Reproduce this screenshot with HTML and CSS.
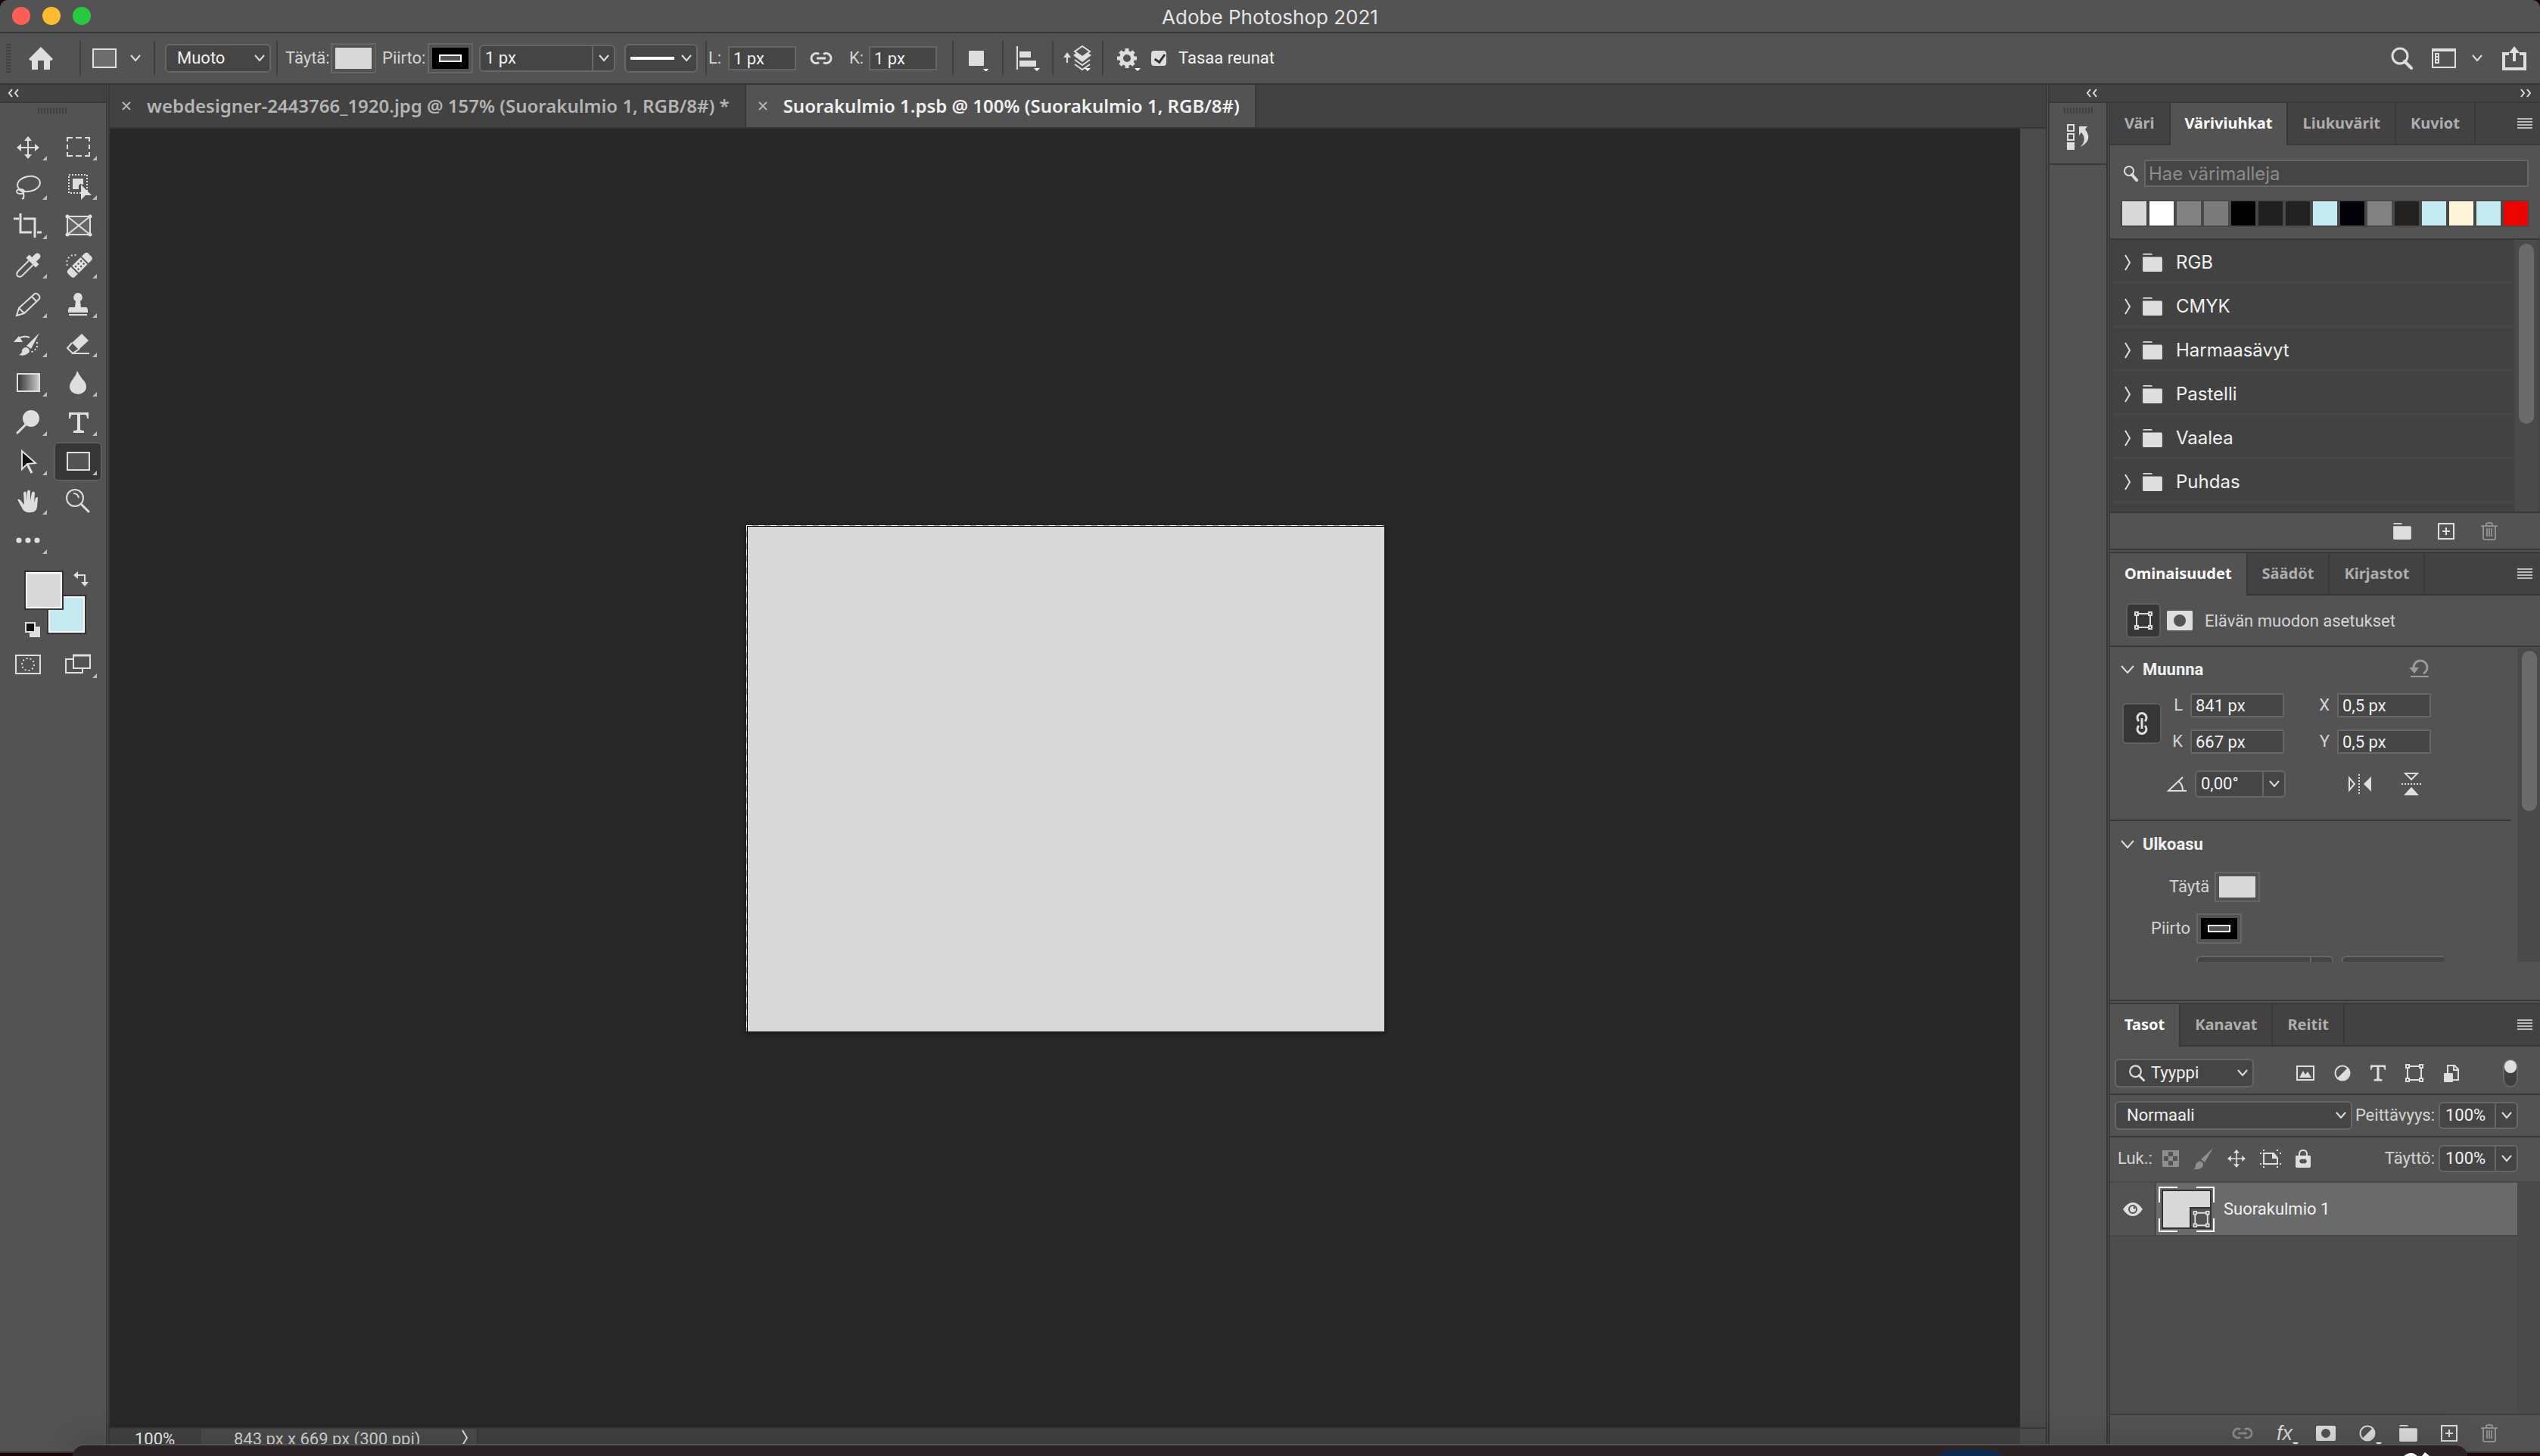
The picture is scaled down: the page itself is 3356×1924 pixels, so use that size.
FILE: index.html
```html
<!DOCTYPE html>
<html lang="fi">
<head>
<meta charset="utf-8">
<title>Adobe Photoshop 2021</title>
<link rel="stylesheet" href="styles.css">
</head>
<body>
<svg class="sprite" aria-hidden="true">
  <defs>
    <linearGradient id="grad"><stop offset="0" stop-color="#333"/><stop offset="1" stop-color="#ccc"/></linearGradient>
    <symbol id="chev" viewBox="0 0 16 12"><path d="M2 2l6 7 6-7" fill="none" stroke="currentColor" stroke-width="2"/></symbol>
    <symbol id="chev-r" viewBox="0 0 12 24"><path d="M2 2l6 10-6 10" fill="none" stroke="currentColor" stroke-width="2"/></symbol>
    <symbol id="dbl-l" viewBox="0 0 18 12"><path d="M7 1L3 6l4 5M15 1l-4 5 4 5" fill="none" stroke="currentColor" stroke-width="2"/></symbol>
    <symbol id="dbl-r" viewBox="0 0 18 12"><path d="M3 1l4 5-4 5M11 1l4 5-4 5" fill="none" stroke="currentColor" stroke-width="2"/></symbol>
    <symbol id="close" viewBox="0 0 12 12"><path d="M1 1l10 10M11 1L1 11" fill="none" stroke="currentColor" stroke-width="2"/></symbol>
    <symbol id="menu" viewBox="0 0 20 14"><path d="M0 1h20M0 5h20M0 9h20M0 13h20" stroke="currentColor" stroke-width="2"/></symbol>
    <symbol id="search" viewBox="0 0 30 30"><circle cx="13" cy="12" r="10" fill="none" stroke="currentColor" stroke-width="3"/><path d="M19 19l9 9" stroke="currentColor" stroke-width="4" stroke-linecap="round"/></symbol>
    <symbol id="link" viewBox="0 0 30 18"><path d="M12 3.500A6.500 6.500 0 1 0 12 14.500M18 3.500A6.500 6.500 0 1 1 18 14.500" fill="none" stroke="currentColor" stroke-width="3"/><path d="M9 9h12" stroke="currentColor" stroke-width="3"/></symbol>
    <symbol id="folder" viewBox="0 0 28 26"><path d="M0 2q0-2 2-2h10q2 0 2 2zM0 5h26q2 0 2 2v17q0 2-2 2H2q-2 0-2-2z" fill="currentColor"/></symbol>
    <symbol id="plus" viewBox="0 0 22 22"><rect x="1" y="1" width="20" height="20" fill="none" stroke="currentColor" stroke-width="2"/><path d="M6 11h10M11 6v10" stroke="currentColor" stroke-width="2"/></symbol>
    <symbol id="trash" viewBox="0 0 22 24"><path d="M0 5h22M7 5V3q0-2 2-2h4q2 0 2 2v2M3 6v15q0 2 2 2h12q2 0 2-2V6M8 8v11M11 8v11M14 8v11" fill="none" stroke="currentColor" stroke-width="2"/></symbol>
    <symbol id="mask" viewBox="0 0 34 26"><path fill-rule="evenodd" d="M2 0h30q2 0 2 2v22q0 2-2 2H2q-2 0-2-2V2q0-2 2-2zM17 5a8 8 0 1 0 0 16a8 8 0 1 0 0-16z" fill="currentColor"/></symbol>
    <symbol id="mask-s" viewBox="0 0 26 20"><path fill-rule="evenodd" d="M2 0h22q2 0 2 2v16q0 2-2 2H2q-2 0-2-2V2q0-2 2-2zM13 4a6 6 0 1 0 0 12a6 6 0 1 0 0-12z" fill="currentColor"/></symbol>
    <symbol id="adjust" viewBox="0 0 22 22"><circle cx="11" cy="11" r="9.500" fill="none" stroke="currentColor" stroke-width="2"/><path d="M18 4A10 10 0 0 1 4 18z" fill="currentColor"/></symbol>
    <symbol id="shape" viewBox="0 0 24 24"><path d="M3 3h18v18H3z" fill="none" stroke="currentColor" stroke-width="2"/><g fill="#484848" stroke="currentColor" stroke-width="2"><rect x="1" y="1" width="4" height="4"/><rect x="19" y="1" width="4" height="4"/><rect x="1" y="19" width="4" height="4"/><rect x="19" y="19" width="4" height="4"/></g></symbol>
    <symbol id="type" viewBox="0 0 26 27"><path d="M0 0h26v8h-2q0-5-3-5h-6v19q0 2 5 2v3H6v-3q5 0 5-2V3H5Q2 3 2 8H0z" fill="currentColor"/></symbol>
    <symbol id="move" viewBox="0 0 30 30"><path d="M15 4v22M4 15h22" stroke="currentColor" stroke-width="2"/><path d="M15 0l5 6H10zM15 30l5-6H10zM0 15l6-5v10zM30 15l-6-5v10z" fill="currentColor"/></symbol>
    <symbol id="arrow-s" viewBox="0 0 8 5"><path d="M0 0h8L4 5z" fill="currentColor"/></symbol>
  </defs>
</svg>

<div class="window">
  <header class="titlebar">
    <div class="lights"><span class="light red"></span><span class="light amber"></span><span class="light green"></span></div>
    <h1>Adobe Photoshop 2021</h1>
  </header>

  <div class="options">
    <div class="group home">
      <span class="grip-v"></span>
      <button class="icon-btn" aria-label="Koti"><svg width="32" height="30" viewBox="0 0 32 30"><path d="M16 0l16 16-2 2h-2v11q0 1-1 1h-7V18h-8v12H5q-1 0-1-1V18H2l-2-2z" fill="currentColor"/></svg></button>
    </div>
    <div class="group shape-tool">
      <svg width="32" height="26" viewBox="0 0 32 26"><rect x="1" y="1" width="30" height="24" fill="#6e6e6e" stroke="currentColor" stroke-width="2"/></svg>
      <svg width="16" height="12"><use href="#chev"/></svg>
    </div>
    <div class="group mode">
      <div class="select"><select aria-label="Tila"><option>Muoto</option></select><svg width="16" height="12"><use href="#chev"/></svg></div>
    </div>
    <div class="group paint">
      <label class="lab" for="fill">Täytä:</label>
      <button id="fill" class="swatch-btn"><span class="fill"></span></button>
      <label class="lab second" for="stroke">Piirto:</label>
      <button id="stroke" class="swatch-btn"><span class="stroke"><i></i></span></button>
      <div class="combo wide"><input value="1 px" aria-label="Piirron leveys"><button aria-label="Avaa"><svg width="16" height="12"><use href="#chev"/></svg></button></div>
      <button class="line-select" aria-label="Piirron tyyppi"><span></span><svg width="16" height="12"><use href="#chev"/></svg></button>
    </div>
    <div class="group size">
      <label for="optw">L:</label><input id="optw" class="field" value="1 px">
      <svg class="chain" width="30" height="18"><use href="#link"/></svg>
      <label for="opth">K:</label><input id="opth" class="field" value="1 px">
    </div>
    <div class="group op"><svg width="28" height="34" viewBox="0 0 28 34"><rect x="2" y="7" width="20" height="20" rx="1" fill="currentColor"/><path d="M21 31h7l-3 4z" fill="#fff"/></svg></div>
    <div class="group op"><svg width="32" height="34" viewBox="0 0 32 34"><path d="M1 1h2v31H1zM5 8h15v8H5zM5 20h22v8H5z" fill="currentColor"/><path d="M24 30h8l-4 4z" fill="#fff"/></svg></div>
    <div class="group op"><svg width="38" height="36" viewBox="0 0 38 36"><path d="M5 12v12" stroke="currentColor" stroke-width="2"/><path d="M5 10l5 7H0z" fill="currentColor"/><g fill="none" stroke="currentColor" stroke-width="2"><path d="M25 2l10 7-10 7-10-7z"/><path d="M15 20l10 7 10-7M15 26l10 7 10-7"/></g><path d="M13 14l4-3 8 5 8-5 4 3-12 9z" fill="currentColor"/><path d="M28 31h8l-4 4z" fill="#fff"/></svg></div>
    <div class="group extra">
      <svg width="34" height="34" viewBox="0 0 34 34"><circle cx="14" cy="17" r="7.500" fill="none" stroke="currentColor" stroke-width="5"/><path d="M14 4v5M14 25v5M1 17h5M22 17h5M5 8l3 3M20 23l3 3M23 8l-3 3M8 23l-3 3" stroke="currentColor" stroke-width="5"/><path d="M24 30h8l-4 4z" fill="#fff"/></svg>
      <label class="check"><input type="checkbox" checked>Tasaa reunat</label>
    </div>
    <div class="app-actions">
      <button class="icon-btn" aria-label="Etsi"><svg width="30" height="30"><use href="#search"/></svg></button>
      <button class="icon-btn" aria-label="Työtila"><svg width="32" height="28" viewBox="0 0 32 28"><path d="M1 2h30v24H1z" fill="none" stroke="currentColor" stroke-width="2"/><path d="M0 1h32v4H0z" fill="currentColor"/><path d="M5 8h4v12H5zM5 12h4M5 16h4" fill="none" stroke="currentColor" stroke-width="2"/></svg><svg width="16" height="12"><use href="#chev"/></svg></button>
      <button class="icon-btn" aria-label="Jaa"><svg width="32" height="32" viewBox="0 0 32 32"><path d="M9 10H2v20h28V10h-7" fill="none" stroke="currentColor" stroke-width="4"/><path d="M16 6v14" stroke="currentColor" stroke-width="4"/><path d="M16 0l7 9H9z" fill="currentColor"/></svg></button>
    </div>
  </div>

  <main class="work">
    <aside class="tools">
      <div class="tools-head"><svg width="18" height="12"><use href="#dbl-l"/></svg></div>
      <span class="grip"></span>
      <div class="tool-grid">
        <button aria-label="Siirto"><svg viewBox="0 0 64 52"><use href="#move" x="17" y="12" width="30" height="30"/><path class="tri" d="M57 38v6h-6z"/></svg></button>
        <button aria-label="Valintakehys"><svg viewBox="0 0 64 52"><path class="ln" d="M18 19v-5h7M29 14h8M41 14h6v5M47 23v6M47 33v5h-6M37 38h-8M25 38h-7v-5M18 29v-6"/><path class="tri" d="M57 38v6h-6z"/></svg></button>
        <button aria-label="Lasso"><svg viewBox="0 0 64 52"><ellipse class="ln" cx="33" cy="23" rx="15" ry="10" transform="rotate(-10 33 23)"/><ellipse class="ln" cx="22" cy="33" rx="5" ry="3"/><path class="ln" d="M20 31q8 2 6 11-1 0-2 1"/><path class="tri" d="M57 38v6h-6z"/></svg></button>
        <button aria-label="Kohteen valinta"><svg viewBox="0 0 64 52"><rect class="ln" x="20" y="11" width="24" height="24" stroke-dasharray="2 2"/><path class="fl" d="M25 16h14v8l-4-1-2 2v5h-8z"/><path class="fl" d="M36 24v20l6-6h8z"/><path class="tri" d="M57 38v6h-6z"/></svg></button>
        <button aria-label="Rajaus"><svg viewBox="0 0 64 52"><path class="ln3" d="M22 10v25h15M44 35h6M13 17h7M26 17h15v25"/><path class="tri" d="M57 38v6h-6z"/></svg></button>
        <button aria-label="Kehys"><svg viewBox="0 0 64 52"><rect x="18" y="14" width="30" height="24" fill="#666" stroke="currentColor" stroke-width="2"/><path class="ln" d="M18 14l30 24M48 14L18 38"/><g class="fl"><circle cx="18" cy="14" r="2.500"/><circle cx="48" cy="14" r="2.500"/><circle cx="18" cy="38" r="2.500"/><circle cx="48" cy="38" r="2.500"/></g></svg></button>
        <button aria-label="Pipetti"><svg viewBox="0 0 64 52"><g transform="rotate(45 33 26)"><path class="fl" d="M29 10a4 4 0 0 1 8 0v6h5v6H24v-6h5z"/><path class="ln" d="M29 22v20q0 4 4 5 4-1 4-5V22"/></g><path class="tri" d="M57 38v6h-6z"/></svg></button>
        <button aria-label="Korjaussivellin"><svg viewBox="0 0 64 52"><g transform="rotate(45 34 26)"><rect class="fl" x="28" y="7" width="13" height="38" rx="4"/><path d="M28 17h13M28 35h13" stroke="#535353" stroke-width="2"/><g fill="#484848"><circle cx="32" cy="21" r="1.200"/><circle cx="37" cy="21" r="1.200"/><circle cx="32" cy="26" r="1.200"/><circle cx="37" cy="26" r="1.200"/><circle cx="32" cy="31" r="1.200"/><circle cx="37" cy="31" r="1.200"/></g></g><path class="ln" d="M18 27q-2-6 2-11 5-5 12-2" stroke-dasharray="2 3"/><path class="tri" d="M57 38v6h-6z"/></svg></button>
        <button aria-label="Kynä"><svg viewBox="0 0 64 52"><path class="ln" d="M17 41l3-10 21-19q2-1 4 1l2 2q1 2 0 4L27 38zM20 31l7 7M37 16l7 7"/><path class="tri" d="M57 38v6h-6z"/></svg></button>
        <button aria-label="Kloonileimasin"><svg viewBox="0 0 64 52"><path class="fl" d="M32 11a6 6 0 0 1 3 11l1 8h7q2 1 2 4v3H19v-3q0-3 2-4h7l1-8a6 6 0 0 1 3-11zM20 39h24v2H20z"/><path class="tri" d="M57 38v6h-6z"/></svg></button>
        <button aria-label="Historiasivellin"><svg viewBox="0 0 64 52"><path class="fl" d="M47 12L36 33l-6-4zM20 41q5-2 4-7 4-5 8-2 4 4 0 7-5 4-12 2zM13 24l7-8 5 8z"/><path class="ln" d="M20 19q7-4 14-1" /><path class="ln" d="M44 24v8l-8 6" stroke-dasharray="2 3"/><path class="tri" d="M57 38v6h-6z"/></svg></button>
        <button aria-label="Pyyhekumi"><svg viewBox="0 0 64 52"><path class="fl" d="M37 13l9 9-13 12-9-9z"/><path class="ln" d="M24 25l-6 7 7 7 9-6M24 39h23"/><path class="tri" d="M57 38v6h-6z"/></svg></button>
        <button aria-label="Liukuväri"><svg viewBox="0 0 64 52"><rect x="18" y="14" width="29" height="23" fill="url(#grad)" stroke="currentColor" stroke-width="2"/><path class="tri" d="M57 38v6h-6z"/></svg></button>
        <button aria-label="Sumennus"><svg viewBox="0 0 64 52"><path class="fl" d="M31 10q2 5 7 11 5 5 5 10a11 10 0 0 1-22 0q0-5 5-11 4-5 5-10z"/><path class="tri" d="M57 38v6h-6z"/></svg></button>
        <button aria-label="Lisävalotus"><svg viewBox="0 0 64 52"><circle class="fl" cx="36" cy="21" r="11"/><path class="ln3" d="M30 28L18 40" stroke-linecap="round"/><path class="tri" d="M57 38v6h-6z"/></svg></button>
        <button aria-label="Teksti"><svg viewBox="0 0 64 52"><use href="#type" x="20" y="13" width="26" height="27"/><path class="tri" d="M57 38v6h-6z"/></svg></button>
        <button aria-label="Polun valinta"><svg viewBox="0 0 64 52"><path class="ln3" d="M31 29l6 12" stroke-width="4"/><path d="M24 12v24l7-7 11-1z" fill="#111" stroke="currentColor" stroke-width="2"/><path class="tri" d="M57 38v6h-6z"/></svg></button>
        <button class="on" aria-label="Suorakulmio"><svg viewBox="0 0 64 52"><rect x="18" y="14" width="29" height="23" fill="#535353" stroke="currentColor" stroke-width="2"/><path class="tri" d="M57 38v6h-6z"/></svg></button>
        <button aria-label="Käsi"><svg viewBox="0 0 64 52"><path class="fl" d="M18 24q2-1 4 1l5 6-1-16q2-3 4 0l1 11V13q2-3 4 0v13l2-11q2-3 4 0l-1 13 2-6q2-2 3 0l-1 12q-1 7-8 7-8 1-11-4z"/><path class="tri" d="M57 38v6h-6z"/></svg></button>
        <button aria-label="Zoomaus"><svg viewBox="0 0 64 52"><circle class="ln" cx="28" cy="22" r="11"/><path class="ln" d="M26 16q6 0 7 6"/><path class="ln3" d="M37 31l9 9" stroke-linecap="round"/></svg></button>
        <button aria-label="Lisää"><svg viewBox="0 0 64 52"><g class="fl"><circle cx="20" cy="26" r="3.600"/><circle cx="32" cy="26" r="3.600"/><circle cx="44" cy="26" r="3.600"/></g><path class="tri" d="M57 38v6h-6z"/></svg></button>
      </div>
      <svg class="colors" width="128" height="92" viewBox="0 0 128 92">
        <rect x="58" y="33" width="50" height="50" fill="#fff" stroke="#333" stroke-width="2"/><rect x="61" y="36" width="44" height="44" fill="#c5eaf2"/>
        <rect x="28" y="1" width="50" height="50" fill="#fff" stroke="#333" stroke-width="2"/><rect x="31" y="4" width="44" height="44" fill="#d9d9d9"/>
        <path d="M97 6h10v12" fill="none" stroke="currentColor" stroke-width="2"/><path d="M92 6l6-5v10zM107 21l-5-6h10z" fill="currentColor"/>
        <rect x="34" y="74" width="14" height="14" fill="currentColor"/><rect x="29" y="69" width="12" height="12" fill="#111" stroke="currentColor" stroke-width="2"/>
      </svg>
      <div class="tool-grid modes">
        <button aria-label="Pikamaski"><svg viewBox="0 0 64 52"><rect class="ln" x="16" y="14" width="32" height="24"/><circle class="ln" cx="32" cy="26" r="8" stroke-dasharray="2 3"/></svg></button>
        <button aria-label="Näyttötila"><svg viewBox="0 0 64 52"><path class="ln" d="M26 19H16v18h22v-7M26 14h22v17H26z"/><path class="ln3" d="M25 14h24"/><path class="tri" d="M57 38v6h-6z"/></svg></button>
      </div>
    </aside>

    <section class="document">
      <nav class="doc-tabs">
        <a class="doc-tab" href="#"><svg width="12" height="12"><use href="#close"/></svg>webdesigner-2443766_1920.jpg @ 157% (Suorakulmio 1, RGB/8#) *</a>
        <a class="doc-tab active" href="#"><svg width="12" height="12"><use href="#close"/></svg>Suorakulmio 1.psb @ 100% (Suorakulmio 1, RGB/8#)</a>
      </nav>
      <div class="stage">
        <div class="canvas"><div class="artboard"></div></div>
        <div class="gutter"></div>
      </div>
      <footer class="status">
        <span class="zoom">100%</span>
        <span class="dims">843 px x 669 px (300 ppi)<svg width="12" height="24"><use href="#chev-r"/></svg></span>
        <span class="hbar"></span>
        <span class="corner"></span>
      </footer>
    </section>

    <aside class="right">
      <div class="right-head">
        <svg width="18" height="12"><use href="#dbl-l"/></svg><svg width="18" height="12"><use href="#dbl-r"/></svg>
      </div>
      <div class="right-body">
        <div class="dock">
          <div class="dock-item">
            <span class="grip"></span>
            <button class="icon-btn" aria-label="Historia"><svg width="30" height="36" viewBox="0 0 30 36"><g fill="none" stroke="currentColor" stroke-width="2"><rect x="1" y="2" width="8" height="8"/><rect x="1" y="14" width="8" height="8"/></g><rect y="25" width="10" height="10" fill="currentColor"/><path d="M16 4h11l-3 4q11 14-6 23 9-10 1-19l-3 4z" fill="currentColor"/></svg></button>
          </div>
        </div>
        <div class="panels">
          <section class="panel swatches">
            <nav class="tabs"><a href="#">Väri</a><a class="active" href="#">Väriviuhkat</a><a href="#">Liukuvärit</a><a href="#">Kuviot</a><button aria-label="Valikko"><svg width="20" height="14"><use href="#menu"/></svg></button></nav>
            <div class="swatch-search"><svg width="20" height="22" viewBox="0 0 20 22"><circle cx="8" cy="8" r="6" fill="none" stroke="currentColor" stroke-width="2"/><path d="M12 13l6 7" stroke="currentColor" stroke-width="4" stroke-linecap="round"/></svg><input type="search" placeholder="Hae värimalleja" aria-label="Hae värimalleja"></div>
            <div class="chips">
              <i style="background:#d9d9d9"></i><i style="background:#fff"></i><i style="background:#828282"></i><i style="background:#7b7b7b"></i><i style="background:#000"></i><i style="background:#202020"></i><i style="background:#222"></i><i style="background:#c5eaf2"></i><i style="background:#030208"></i><i style="background:#828282"></i><i style="background:#232220"></i><i style="background:#c5eaf2"></i><i style="background:#fff4d9"></i><i style="background:#c5eaf2"></i><i style="background:#ea0400"></i>
            </div>
            <div class="swatch-list">
              <ul>
                <li><svg width="12" height="24"><use href="#chev-r"/></svg><svg width="28" height="24"><use href="#folder"/></svg>RGB</li>
                <li><svg width="12" height="24"><use href="#chev-r"/></svg><svg width="28" height="24"><use href="#folder"/></svg>CMYK</li>
                <li><svg width="12" height="24"><use href="#chev-r"/></svg><svg width="28" height="24"><use href="#folder"/></svg>Harmaasävyt</li>
                <li><svg width="12" height="24"><use href="#chev-r"/></svg><svg width="28" height="24"><use href="#folder"/></svg>Pastelli</li>
                <li><svg width="12" height="24"><use href="#chev-r"/></svg><svg width="28" height="24"><use href="#folder"/></svg>Vaalea</li>
                <li><svg width="12" height="24"><use href="#chev-r"/></svg><svg width="28" height="24"><use href="#folder"/></svg>Puhdas</li>
              </ul>
              <div class="track"><span></span></div>
            </div>
            <div class="panel-foot">
              <button aria-label="Uusi ryhmä"><svg width="24" height="22"><use href="#folder"/></svg></button>
              <button aria-label="Uusi malli"><svg width="22" height="22"><use href="#plus"/></svg></button>
              <button class="off" aria-label="Poista"><svg width="22" height="24"><use href="#trash"/></svg></button>
            </div>
          </section>

          <section class="panel props">
            <nav class="tabs"><a class="active" href="#">Ominaisuudet</a><a href="#">Säädöt</a><a href="#">Kirjastot</a><button aria-label="Valikko"><svg width="20" height="14"><use href="#menu"/></svg></button></nav>
            <div class="prop-head">
              <button class="pressed" aria-label="Muoto"><svg width="24" height="24"><use href="#shape"/></svg></button>
              <svg width="34" height="26"><use href="#mask"/></svg>
              <span>Elävän muodon asetukset</span>
            </div>
            <div class="prop-scroll">
              <div class="prop-main">
                <div class="transform">
                  <h2><svg width="18" height="12" viewBox="0 0 18 12"><path d="M1 1l8 9 8-9" fill="none" stroke="currentColor" stroke-width="2"/></svg>Muunna
                    <svg class="reset" width="26" height="26" viewBox="0 0 26 26"><path d="M6 13a9 9 0 1 1 13 7" fill="none" stroke="currentColor" stroke-width="3"/><path d="M0 12h13l-6 8zM2 23h24v2H2z" fill="currentColor"/></svg></h2>
                  <div class="xform">
                    <button class="pressed chain-btn" aria-label="Linkitä"><svg width="18" height="34" viewBox="0 0 18 34"><path d="M5 14A6 6 0 1 1 13 14M5 20A6 6 0 1 0 13 20M9 10v14" fill="none" stroke="currentColor" stroke-width="3"/></svg></button>
                    <label for="w">L</label><input id="w" class="field" value="841 px"><label for="x">X</label><input id="x" class="field" value="0,5 px">
                    <label for="h">K</label><input id="h" class="field" value="667 px"><label for="y">Y</label><input id="y" class="field" value="0,5 px">
                  </div>
                  <div class="angle">
                    <svg width="28" height="22" viewBox="0 0 28 22"><path d="M27 20H3L22 2M17 8q5 4 5 12" fill="none" stroke="currentColor" stroke-width="2"/></svg>
                    <div class="combo"><input value="0,00°" aria-label="Kulma"><button aria-label="Avaa"><svg width="16" height="12"><use href="#chev"/></svg></button></div>
                    <button class="icon-btn flip-h" aria-label="Käännä vaakasuunnassa"><svg width="32" height="28" viewBox="0 0 32 28"><path d="M2 6v16l7-8z" fill="none" stroke="currentColor" stroke-width="2"/><path d="M31 4v20l-10-10z" fill="currentColor"/><path d="M15 1v26" stroke="currentColor" stroke-width="2" stroke-dasharray="2 2"/></svg></button>
                    <button class="icon-btn" aria-label="Käännä pystysuunnassa"><svg width="28" height="32" viewBox="0 0 28 32"><path d="M6 2h16l-8 8z" fill="none" stroke="currentColor" stroke-width="2"/><path d="M4 31h20L14 20z" fill="currentColor"/><path d="M1 16h26" stroke="currentColor" stroke-width="2" stroke-dasharray="2 2"/></svg></button>
                  </div>
                </div>
                <div class="look">
                  <h2><svg width="18" height="12" viewBox="0 0 18 12"><path d="M1 1l8 9 8-9" fill="none" stroke="currentColor" stroke-width="2"/></svg>Ulkoasu</h2>
                  <div class="look-row fill-row"><label for="pf">Täytä</label><button id="pf" class="swatch-btn"><span class="fill"></span></button></div>
                  <div class="look-row"><label for="ps">Piirto</label><button id="ps" class="swatch-btn"><span class="stroke"><i></i></span></button></div>
                  <div class="look-cut"><div class="combo"><input aria-label="Leveys"><button aria-label="Avaa"></button></div><div class="combo half"><input aria-label="Tyyppi"></div></div>
                </div>
              </div>
              <div class="track"><span></span></div>
            </div>
          </section>

          <section class="panel layers">
            <nav class="tabs"><a class="active" href="#">Tasot</a><a href="#">Kanavat</a><a href="#">Reitit</a><button aria-label="Valikko"><svg width="20" height="14"><use href="#menu"/></svg></button></nav>
            <div class="row filter">
              <div class="select kind"><svg class="lead" width="22" height="22"><use href="#search"/></svg><select aria-label="Suodatin"><option>Tyyppi</option></select><svg width="16" height="12"><use href="#chev"/></svg></div>
              <div class="filter-icons">
                <svg width="24" height="22" viewBox="0 0 24 22"><rect x="1" y="2" width="22" height="18" fill="none" stroke="currentColor" stroke-width="2"/><path d="M4 17l5-9 3 5 3-4 5 8z" fill="currentColor"/></svg>
                <svg width="22" height="22"><use href="#adjust"/></svg>
                <svg width="20" height="22"><use href="#type"/></svg>
                <svg width="24" height="24"><use href="#shape"/></svg>
                <svg width="22" height="24" viewBox="0 0 22 24"><path d="M6 12V2h9l5 5v14h-7M14 2v6h6" fill="none" stroke="currentColor" stroke-width="2"/><rect x="1" y="12" width="12" height="12" rx="1" fill="currentColor"/></svg>
              </div>
              <button class="toggle" aria-label="Suodatus"><i></i></button>
            </div>
            <div class="row blend">
              <div class="select"><select aria-label="Sekoitustila"><option>Normaali</option></select><svg width="16" height="12"><use href="#chev"/></svg></div>
              <label for="op">Peittävyys:</label>
              <div class="combo pct"><input id="op" value="100%"><button aria-label="Avaa"><svg width="16" height="12"><use href="#chev"/></svg></button></div>
            </div>
            <div class="row lock">
              <span class="lock-label">Luk.:</span>
              <div class="lock-icons">
                <svg class="off" width="22" height="24" viewBox="0 0 22 24"><rect x="1" y="2" width="20" height="20" fill="none" stroke="currentColor" stroke-width="2"/><path d="M1 2h7v7H1zM14 2h7v7h-7zM8 9h6v6H8zM1 15h7v7H1zM14 15h7v7h-7z" fill="currentColor"/></svg>
                <svg class="off" width="26" height="28" viewBox="0 0 26 28"><path d="M26 0L15 19l-5-4zM0 28q3-1 3-6 3-6 8-4 4 4 0 8-4 3-11 2z" fill="currentColor"/></svg>
                <svg width="24" height="26"><use href="#move"/></svg>
                <svg width="28" height="24" viewBox="0 0 28 24"><path d="M5 5h13l5 6v8H5z" fill="none" stroke="currentColor" stroke-width="2"/><path d="M16 4l8 8h-8zM4 0h2v2H4zM22 0h2v2h-2zM0 4h2v2H0zM26 4h2v2h-2zM0 18h2v2H0zM26 18h2v2h-2zM4 22h2v2H4zM22 22h2v2h-2z" fill="currentColor"/></svg>
                <svg width="20" height="24" viewBox="0 0 20 24"><path d="M5 10V6q0-5 5-5t5 5v4" fill="none" stroke="currentColor" stroke-width="2"/><path fill-rule="evenodd" d="M1 8h18q1 0 1 1v13q0 2-2 2H2q-2 0-2-2V9q0-1 1-1zM10 13a3 3 0 1 0 0 5a3 3 0 1 0 0-5z" fill="currentColor"/></svg>
              </div>
              <label for="fo">Täyttö:</label>
              <div class="combo pct"><input id="fo" value="100%"><button aria-label="Avaa"><svg width="16" height="12"><use href="#chev"/></svg></button></div>
            </div>
            <div class="layer-list">
              <div class="layer">
                <button class="eye" aria-label="Näkyvyys"><svg width="26" height="18" viewBox="0 0 26 18"><path fill-rule="evenodd" d="M0 9Q6 0 13 0t13 9q-6 9-13 9T0 9zM13 3a6 6 0 1 0 0 12a6 6 0 1 0 0-12z" fill="currentColor"/><circle cx="13" cy="9" r="4" fill="currentColor"/><circle cx="15" cy="7" r="1.500" fill="#535353"/></svg></button>
                <div class="layer-main">
                  <svg width="74" height="60" viewBox="0 0 74 60"><path d="M1 21V1h24M50 1h23v20M73 42v17H50M25 59H1V42" fill="none" stroke="#fff" stroke-width="2"/><rect x="5" y="5" width="64" height="50" fill="#d9d9d9" stroke="#333" stroke-width="2"/><rect x="42" y="28" width="27" height="27" fill="#535353" stroke="#333" stroke-width="2"/><use href="#shape" x="45" y="32" width="23" height="22"/></svg>
                  <span>Suorakulmio 1</span>
                </div>
              </div>
              <div class="layer-track"></div>
            </div>
            <div class="panel-foot layer-foot">
              <button class="off" aria-label="Linkitä"><svg width="28" height="18"><use href="#link"/></svg></button>
              <button aria-label="Tehosteet" class="fx more"><span>fx</span><svg width="8" height="5"><use href="#arrow-s"/></svg></button>
              <button aria-label="Maski"><svg width="26" height="20"><use href="#mask-s"/></svg></button>
              <button aria-label="Säätötaso" class="more"><svg width="22" height="22"><use href="#adjust"/></svg><svg width="8" height="5"><use href="#arrow-s"/></svg></button>
              <button aria-label="Uusi ryhmä"><svg width="24" height="22"><use href="#folder"/></svg></button>
              <button aria-label="Uusi taso"><svg width="22" height="22"><use href="#plus"/></svg></button>
              <button class="off" aria-label="Poista"><svg width="22" height="24"><use href="#trash"/></svg></button>
            </div>
          </section>
        </div>
      </div>
    </aside>
  </main>
</div>

<div class="mac-dock">
  <svg width="86" height="10" viewBox="0 0 86 10"><path d="M0 10Q8 2 30 2h26q22 0 30 8z" fill="#0b2c50"/></svg>
  <svg width="40" height="6" viewBox="0 0 40 6"><path d="M0 6q8-6 14-3l4 3zM24 6l4-5 6 5z" fill="#fff"/></svg>
</div>
</body>
</html>
```
FILE: styles.css
```css
* { box-sizing: border-box; }

:root {
  --bg: #535353;
  --dark: #424242;
  --line: #383838;
  --field: #454545;
  --edge: #666;
  --text: #f0f0f0;
  --label: #d4d4d4;
  --icon: #dedede;
}

body {
  margin: 0;
  height: 100vh;
  overflow: hidden;
  position: relative;
  background: #1c0409;
  color: var(--text);
  font: 22px/28px Roboto, "Liberation Sans", sans-serif;
}

svg { display: block; flex: none; color: var(--icon); }
.sprite { position: absolute; width: 0; height: 0; }
button, input, select { font: inherit; color: inherit; margin: 0; padding: 0; border: 0; background: none; border-radius: 0; min-width: 0; }
button { display: flex; align-items: center; justify-content: center; }
a { color: inherit; text-decoration: none; }
h1, h2, ul { margin: 0; padding: 0; font-size: inherit; list-style: none; }
label { color: var(--label); white-space: nowrap; }

.window {
  height: calc(100vh - 4px);
  display: flex;
  flex-direction: column;
  background: var(--bg);
  border-radius: 10px 10px 0 0;
  border-bottom: 2px solid var(--line);
  overflow: hidden;
}

/* Title bar */
.titlebar {
  flex: none;
  height: 44px;
  display: grid;
  grid-template-columns: 1fr auto 1fr;
  align-items: center;
  border-bottom: 2px solid var(--line);
}
.titlebar h1 { padding-top: 3px; font: 400 26px/32px Inter, "Liberation Sans", sans-serif; color: #e4e4e4; }
.lights { display: flex; gap: 16px; padding-left: 16px; }
.light { width: 24px; height: 24px; border-radius: 50%; }
.red { background: #ff5f57; }
.amber { background: #febc2e; }
.green { background: #28c840; }

/* Options bar */
.options {
  flex: none;
  height: 68px;
  display: grid;
  grid-template-columns: 105px 98px 162px 567px 326px 66px 66px 66px 1fr auto;
  align-items: center;
  border-bottom: 2px solid var(--line);
}
.group { height: 46px; display: flex; align-items: center; border-left: 2px solid #404040; }
.home { border: 0; gap: 24px; padding-left: 8px; }
.grip-v { width: 6px; height: 38px; background: repeating-linear-gradient(#404040 0 2px, transparent 2px 4px); }
.icon-btn { gap: 20px; }
.shape-tool { gap: 17px; padding-left: 15px; }
.mode { padding-left: 13px; }
.mode .select { width: 140px; }

.select { position: relative; display: flex; align-items: center; height: 38px; background: var(--field); border: 2px solid var(--edge); border-radius: 6px; }
.select select { appearance: none; flex: 1; height: 100%; padding-left: 14px; outline: 0; }
.select > svg:last-child { position: absolute; right: 5px; pointer-events: none; }

.paint { padding-left: 10px; }
.lab { width: 60px; }
.second { margin-left: 8px; }
.swatch-btn { width: 60px; height: 40px; border: 2px solid var(--edge); }
.swatch-btn span { width: 48px; height: 28px; display: flex; align-items: center; justify-content: center; }
.fill { background: #d9d9d9; }
.stroke { background: #000; }
.stroke i { width: 30px; height: 10px; border: 2px solid #fff; background: var(--bg); }

.combo { display: flex; height: 36px; background: var(--field); border: 2px solid var(--edge); border-radius: 6px; overflow: hidden; }
.combo input { flex: 1; width: 0; padding-left: 6px; }
.combo button { width: 29px; border-left: 2px solid var(--edge); }
.wide { width: 180px; margin: 0 12px 0 8px; }
.line-select { width: 97px; height: 38px; gap: 8px; background: var(--field); border: 2px solid var(--edge); border-radius: 6px; }
.line-select span { width: 58px; height: 4px; background: #fff; }

.size { padding-left: 2px; }
.size label { width: 26px; }
.field { height: 32px; padding-left: 5px; background: var(--field); border: 2px solid var(--edge); }
.size .field { width: 90px; }
.chain { margin: 0 22px 0 18px; }
.op { justify-content: center; }
.extra { padding-left: 17px; gap: 12px; }
.check { display: flex; align-items: center; gap: 16px; color: var(--text); }
.check input { appearance: none; width: 20px; height: 20px; border-radius: 4px; background: var(--icon); }
.check input::after { content: ""; display: block; width: 6px; height: 11px; margin: 2px 0 0 7px; border: solid #333; border-width: 0 3px 3px 0; transform: rotate(35deg); }
.app-actions { display: flex; align-items: center; gap: 25px; padding-right: 18px; }

/* Work area */
.work { flex: 1; min-height: 0; display: flex; }
.tools { flex: none; width: 145px; border-right: 5px double var(--line); background: var(--bg); display: flex; flex-direction: column; }
.tools-head { height: 24px; padding: 5px 9px; background: var(--dark); border-bottom: 2px solid var(--line); }
.grip { width: 38px; height: 8px; background: repeating-linear-gradient(90deg, #404040 0 2px, transparent 2px 4px); }
.tools .grip { margin: 6px 0 18px 50px; }
.tool-grid { display: grid; grid-template-columns: 64px 64px; grid-auto-rows: 52px; gap: 0 2px; padding-left: 5px; }
.tool-grid svg { width: 64px; height: 52px; }
.tool-grid button { border-radius: 6px; }
.tool-grid .on { background: #373737; box-shadow: inset 0 0 0 2px #5e5e5e; }
.ln { fill: none; stroke: currentColor; stroke-width: 2px; }
.ln3 { fill: none; stroke: currentColor; stroke-width: 3px; }
.fl { fill: currentColor; }
.tri { fill: #bdbdbd; }
.colors { margin: 14px 0 6px 5px; }

.document { flex: 1; min-width: 0; display: flex; flex-direction: column; }
.doc-tabs { display: flex; height: 58px; background: var(--dark); border-bottom: 2px solid var(--line); font: 600 24px/30px "Noto Sans", "Open Sans", sans-serif; color: #b4b4b4; }
.doc-tab { display: flex; align-items: center; gap: 21px; padding: 0 20px 0 16px; border-right: 2px solid var(--line); white-space: nowrap; }
.doc-tab svg { color: #b4b4b4; }
.doc-tab.active { background: var(--bg); color: var(--text); }
.stage { flex: 1; min-height: 0; display: flex; background: #282828; }
.canvas { flex: 1; display: flex; align-items: center; justify-content: center; }
.artboard {
  width: 843px;
  height: 669px;
  background:
    repeating-linear-gradient(90deg, #fff 0 8px, #aaa 8px 16px) 0 0 / 100% 1px no-repeat,
    repeating-linear-gradient(#fff 0 8px, #aaa 8px 16px) 0 0 / 1px 100% no-repeat,
    linear-gradient(#000, #000) 1px 1px / 100% 1px no-repeat,
    linear-gradient(#000, #000) 1px 1px / 1px 100% no-repeat,
    #d9d9d9;
  box-shadow: 0 2px 6px #111;
}
.gutter { width: 34px; background: #4b4b4b; }
.status { flex: none; height: 32px; display: flex; background: var(--dark); border-top: 2px solid #3a3a3a; color: var(--label); }
.status span { display: flex; }
.zoom { width: 121px; padding-left: 33px; color: var(--text); }
.dims { width: 366px; padding: 0 9px 0 43px; justify-content: space-between; background: #4b4b4b; border-right: 2px solid #3a3a3a; white-space: nowrap; }
.status .hbar { flex: 1; }
.status .corner { width: 34px; background: #4f4f4f; }

/* Right column */
.right { flex: none; width: 653px; display: flex; flex-direction: column; border-left: 5px double var(--line); }
.right-head { height: 24px; display: flex; justify-content: space-between; padding: 5px 10px 5px 47px; background: var(--dark); border-bottom: 2px solid var(--line); }
.right-body { flex: 1; min-height: 0; display: flex; }
.dock { width: 80px; border-right: 5px double var(--line); }
.dock-item { height: 82px; display: flex; flex-direction: column; align-items: center; gap: 13px; padding-top: 6px; border-bottom: 2px solid var(--line); }
.panels { flex: 1; min-width: 0; display: flex; flex-direction: column; }
.panel { border-bottom: 6px double var(--line); display: flex; flex-direction: column; }
.tabs { flex: none; display: flex; height: 56px; background: linear-gradient(var(--dark) 54px, var(--line) 54px); font: 700 20px/28px "Noto Sans", "Open Sans", sans-serif; color: #aeaeae; }
.tabs a { display: flex; align-items: center; padding: 0 19px 3px; border-right: 2px solid var(--line); }
.tabs .active { background: var(--bg); color: #fff; }
.tabs button { margin-left: auto; padding: 0 10px 2px 0; }
.tabs svg { color: #bbb; }

.swatch-search { display: flex; align-items: center; gap: 8px; padding: 19px 15px 0 17px; }
.swatch-search input { appearance: none; flex: 1; height: 36px; padding-left: 4px; background: var(--field); border: 2px solid var(--edge); font: 24px/28px Inter, "Liberation Sans", sans-serif; }
.swatch-search input::placeholder { color: #8c8c8c; opacity: 1; }
.chips { display: grid; grid-template-columns: repeat(15, 32px); gap: 4px; margin: 17px auto 15px 14px; padding: 2px; background: #484848; }
.chips i { height: 32px; }
.swatch-list { display: flex; height: 363px; padding-right: 2px; border: solid var(--line); border-width: 2px 0; background: var(--dark); }
.swatch-list ul { flex: 1; margin-left: 4px; }
.swatch-list li { height: 58px; display: flex; align-items: center; gap: 16px; padding: 4px 0 0 14px; border-bottom: 3px solid #474747; font: 24px/28px Inter, "Liberation Sans", sans-serif; }
.swatch-list li svg + svg { margin: 0 1px 0 -4px; }
.track { flex: none; width: 32px; padding: 5px 6px; background: #4a4a4a; }
.track span { display: block; height: 238px; width: 20px; border-radius: 10px; background: #6a6a6a; }
.panel-foot { flex: none; display: flex; align-items: center; justify-content: flex-end; gap: 35px; height: 47px; padding-right: 56px; }
.off svg, svg.off { color: #8e8e8e; }

/* Properties */
.prop-head { display: flex; align-items: center; height: 68px; padding-left: 21px; gap: 8px; border-bottom: 2px solid var(--line); color: var(--label); }
.prop-head span { margin-left: 8px; padding-top: 2px; }
.pressed { width: 46px; height: 46px; background: #363636; border: 2px solid #5e5e5e; border-radius: 6px; }
.prop-scroll { height: 416px; margin-bottom: 50px; display: flex; overflow: hidden; }
.prop-main { flex: 1; }
.prop-scroll .track { width: 30px; }
.prop-scroll .track span { height: 212px; }
.transform { height: 230px; margin-right: 8px; padding: 16px 0 0 14px; border-bottom: 2px solid var(--line); }
.props h2 { display: flex; align-items: center; height: 28px; gap: 11px; font-weight: 700; }
.reset { margin: 0 109px 4px auto; color: #9a9a9a; }
.xform { display: grid; grid-template-columns: 54px 28px 124px 60px 124px; grid-template-rows: 32px 32px; gap: 16px 5px; margin-top: 17px; align-items: center; }
.xform label { text-align: right; padding-right: 5px; }
.chain-btn { grid-row: 1 / 3; width: 52px; height: 54px; margin-left: 2px; }
.angle { display: flex; align-items: center; margin: 22px 0 0 60px; }
.angle .combo { width: 120px; margin: 0 82px 0 10px; }
.flip-h { margin-right: 38px; }
.look { padding: 17px 0 0 14px; }
.look-row { display: flex; align-items: center; gap: 9px; margin: 15px 0 0 40px; }
.look-row label { width: 51px; }
.fill-row { margin: 22px 0 0 64px; }
.look-cut { display: flex; gap: 11px; margin: 16px 0 0 100px; }
.look-cut .combo { width: 181px; }
.look-cut .half { width: 135px; border-right: 0; border-radius: 6px 0 0 6px; }

/* Layers */
.layers { flex: 1; min-height: 0; border-bottom: 0; }
.row { flex: none; display: flex; align-items: center; height: 56px; padding-left: 6px; border-bottom: 2px solid var(--line); }
.filter { height: 64px; padding-top: 8px; }
.kind { width: 184px; padding-left: 16px; }
.kind select { padding-left: 8px; }
.filter-icons { display: flex; align-items: center; gap: 26px; margin-left: 56px; }
.toggle { width: 20px; height: 38px; margin-left: 57px; align-items: flex-start; background: #3f3f3f; border-radius: 10px; box-shadow: inset 0 0 0 2px var(--edge); }
.toggle i { width: 16px; height: 17px; margin-top: 2px; border-radius: 8px; background: var(--icon); }
.blend .select { width: 314px; }
.blend label { margin-left: auto; }
.pct { width: 105px; margin: 0 29px 0 5px; }
.pct input { padding-left: 7px; }
.lock { height: 60px; padding: 0 0 2px 10px; border-bottom-color: #4a4a4a; }
.lock-label { width: 46px; color: var(--label); }
.lock-icons { display: flex; align-items: center; gap: 19px; margin-left: 13px; }
.lock label { margin-left: auto; }
.layer-list { flex: 1; min-height: 0; display: flex; background: #4d4d4d; }
.layer { flex: 1; height: 71px; display: flex; background: var(--bg); border-bottom: 2px solid #484848; }
.eye { width: 61px; border-right: 2px solid #484848; }
.layer-main { flex: 1; display: flex; align-items: center; gap: 12px; padding-left: 3px; background: #6a6a6a; }
.layer-track { width: 30px; background: #4a4a4a; }
.layer-foot { height: 50px; border-top: 2px solid #404040; gap: 31px; }
.more { align-self: stretch; }
.more svg:last-child { align-self: flex-end; margin: 0 -8px 7px 0; color: #fff; }
.fx span { font: italic 27px/28px "Liberation Sans", sans-serif; color: var(--icon); }

/* System dock peeking over the window's lower edge */
.mac-dock {
  position: absolute;
  left: 96px;
  right: 96px;
  bottom: 0;
  height: 16px;
  display: flex;
  justify-content: flex-end;
  align-items: flex-end;
  gap: 530px;
  padding-right: 44px;
  background: #2b2225;
  border-top: 2px solid #585254;
  border-radius: 24px 24px 0 0;
  box-shadow: 0 0 40px rgba(0, 0, 0, .3);
}
```
